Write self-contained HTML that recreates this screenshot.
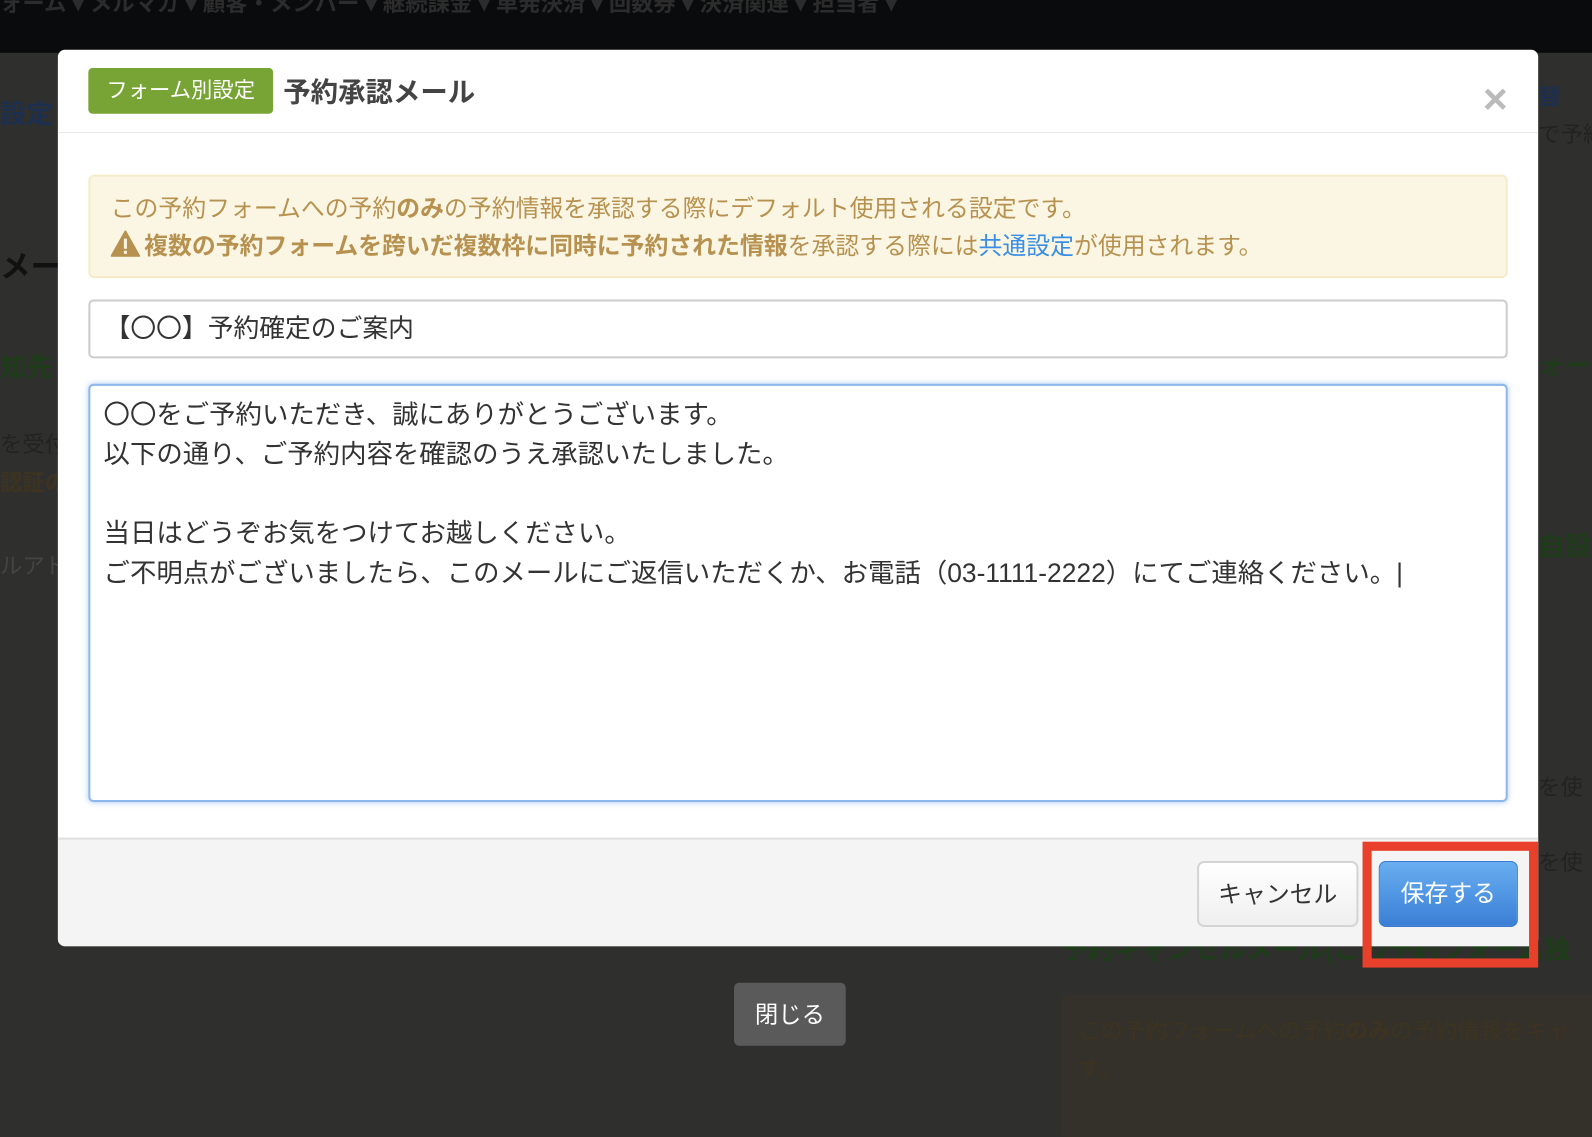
<!DOCTYPE html>
<html><head><meta charset="utf-8"><style>
*{box-sizing:border-box;margin:0;padding:0}
body{width:1592px;height:1106px;overflow:hidden;background:#2f302e;font-family:"Liberation Sans","Noto Sans CJK JP",sans-serif;color:#333}
.wrap{position:absolute;left:0;top:0;width:1568px;height:1090px;transform:scale(1.0153);transform-origin:0 0}
.nav{position:absolute;left:0;top:0;width:1600px;height:52px;background:#0a0b0d;color:#2c2c2c;font-size:22px;font-weight:bold;white-space:nowrap;overflow:hidden}
.nav span{position:absolute;top:-14px}
.bg{position:absolute;white-space:nowrap;font-size:22px}
.modal{position:absolute;left:57px;top:49px;width:1458px;height:883px;background:#fff;border-radius:7px;overflow:hidden}
.hdr{height:82px;border-bottom:1px solid #e8e8e8;position:relative}
.badge{position:absolute;left:30px;top:18px;width:182px;height:45px;background:#77a434;color:#fff;border-radius:4px;font-size:21px;line-height:45px;text-align:center}
.title{position:absolute;left:222px;top:20px;font-size:27px;font-weight:bold;color:#444}
.close{position:absolute;right:30px;top:28px;font-size:42px;font-weight:bold;color:#bbb;line-height:1}
.alert{position:absolute;left:30px;top:123px;width:1398px;height:102px;background:#fbf6e3;border:2px solid #f6ebc9;border-radius:6px;color:#b7914f;font-size:23.5px;padding:13px 20px;line-height:37px;white-space:nowrap}
.alert a{color:#3a8ee6}
.alert svg{vertical-align:-3px;margin-right:4px}
.input{position:absolute;left:30px;top:246px;width:1398px;height:58px;border:2px solid #ccc;border-radius:5px;font-size:25.4px;line-height:54px;padding-left:14px;color:#333}
.ta{position:absolute;left:30px;top:329px;width:1398px;height:412px;border:2px solid #8bb7ea;border-radius:5px;box-shadow:0 0 6px rgba(100,160,230,.5);font-size:26px;line-height:39px;padding:9px 13px;color:#333;white-space:pre}
.ftr{position:absolute;left:0;top:776px;width:100%;height:107px;background:#f4f4f4;border-top:2px solid #e0e0e0}
.btn{position:absolute;top:21px;height:65px;border-radius:7px;font-size:23.5px;line-height:63px;text-align:center}
.cancel{left:1122px;width:159px;background:linear-gradient(#fff,#efefef);border:2px solid #d4d4d4;color:#333}
.save{left:1301px;width:137px;background:linear-gradient(#68aef0,#3b7fd6);border:1px solid #3a7ad0;color:#fff}
.red{position:absolute;left:1342px;top:829px;width:173px;height:124px;border:9px solid #e8402a}
.closebtn{position:absolute;left:723px;top:968px;width:110px;height:62px;background:#5a5a5a;border-radius:5px;color:#fff;font-size:23px;line-height:62px;text-align:center}
</style></head><body><div class="wrap">
<div class="nav"><span style="left:0">ォーム ▾ メルマガ ▾ 顧客・メンバー ▾ 継続課金 ▾ 単発決済 ▾ 回数券 ▾ 決済関連 ▾ 担当者 ▾</span></div>
<div class="bg" style="left:0;top:92px;color:#1d2f4f;font-weight:bold;font-size:26px">設定 ▾</div>
<div class="bg" style="left:0;top:238px;color:#111;font-weight:bold;font-size:30px">メー</div>
<div class="bg" style="left:0;top:342px;color:#1e3b1a;font-weight:bold;font-size:26px">知先</div>
<div class="bg" style="left:0;top:420px;color:#222">を受付</div>
<div class="bg" style="left:0;top:458px;color:#3d3320;font-weight:bold">認証の</div>
<div class="bg" style="left:0;top:540px;color:#444">ルアド</div>
<div class="bg" style="left:1515px;top:78px;color:#1d2f4f;font-weight:bold">替</div>
<div class="bg" style="left:1515px;top:115px;color:#222">で予約</div>
<div class="bg" style="left:1515px;top:340px;color:#1e3b1a;font-weight:bold;font-size:26px">ォーム</div>
<div class="bg" style="left:1515px;top:518px;color:#1e3b1a;font-weight:bold;font-size:26px">自設定</div>
<div class="bg" style="left:1515px;top:758px;color:#222">を使</div>
<div class="bg" style="left:1515px;top:832px;color:#222">を使</div>
<div class="bg" style="left:1045px;top:915px;color:#1e3b1a;font-weight:bold;font-size:26px">予約キャンセルメール(この予約フォーム独</div>
<div style="position:absolute;left:1045px;top:980px;width:560px;height:140px;background:#34312a;border-radius:6px"></div>
<div class="bg" style="left:1062px;top:998px;color:#3d3320">この予約フォームへの予約<b>のみ</b>の予約情報をキャ</div>
<div class="bg" style="left:1062px;top:1036px;color:#3d3320">す。</div>
<div class="modal">
<div class="hdr"><div class="badge">フォーム別設定</div><div class="title">予約承認メール</div><div class="close">×</div></div>
<div class="alert">この予約フォームへの予約<b>のみ</b>の予約情報を承認する際にデフォルト使用される設定です。<br><svg width="29" height="26" viewBox="0 0 29 26"><path d="M14.5 1 L28 25 L1 25 Z" fill="#b7914f" stroke="#b7914f" stroke-linejoin="round" stroke-width="2"/><rect x="13" y="8" width="3" height="10" fill="#fbf6e3"/><rect x="13" y="20" width="3" height="3" fill="#fbf6e3"/></svg><b>複数の予約フォームを跨いだ複数枠に同時に予約された情報</b>を承認する際には<a>共通設定</a>が使用されます。</div>
<div class="input">【〇〇】予約確定のご案内</div>
<div class="ta">〇〇をご予約いただき、誠にありがとうございます。
以下の通り、ご予約内容を確認のうえ承認いたしました。

当日はどうぞお気をつけてお越しください。
ご不明点がございましたら、このメールにご返信いただくか、お電話（03-1111-2222）にてご連絡ください。|</div>
<div class="ftr"><div class="btn cancel">キャンセル</div><div class="btn save">保存する</div></div>
</div>
<div class="red"></div>
<div class="closebtn">閉じる</div>
</div></body></html>
